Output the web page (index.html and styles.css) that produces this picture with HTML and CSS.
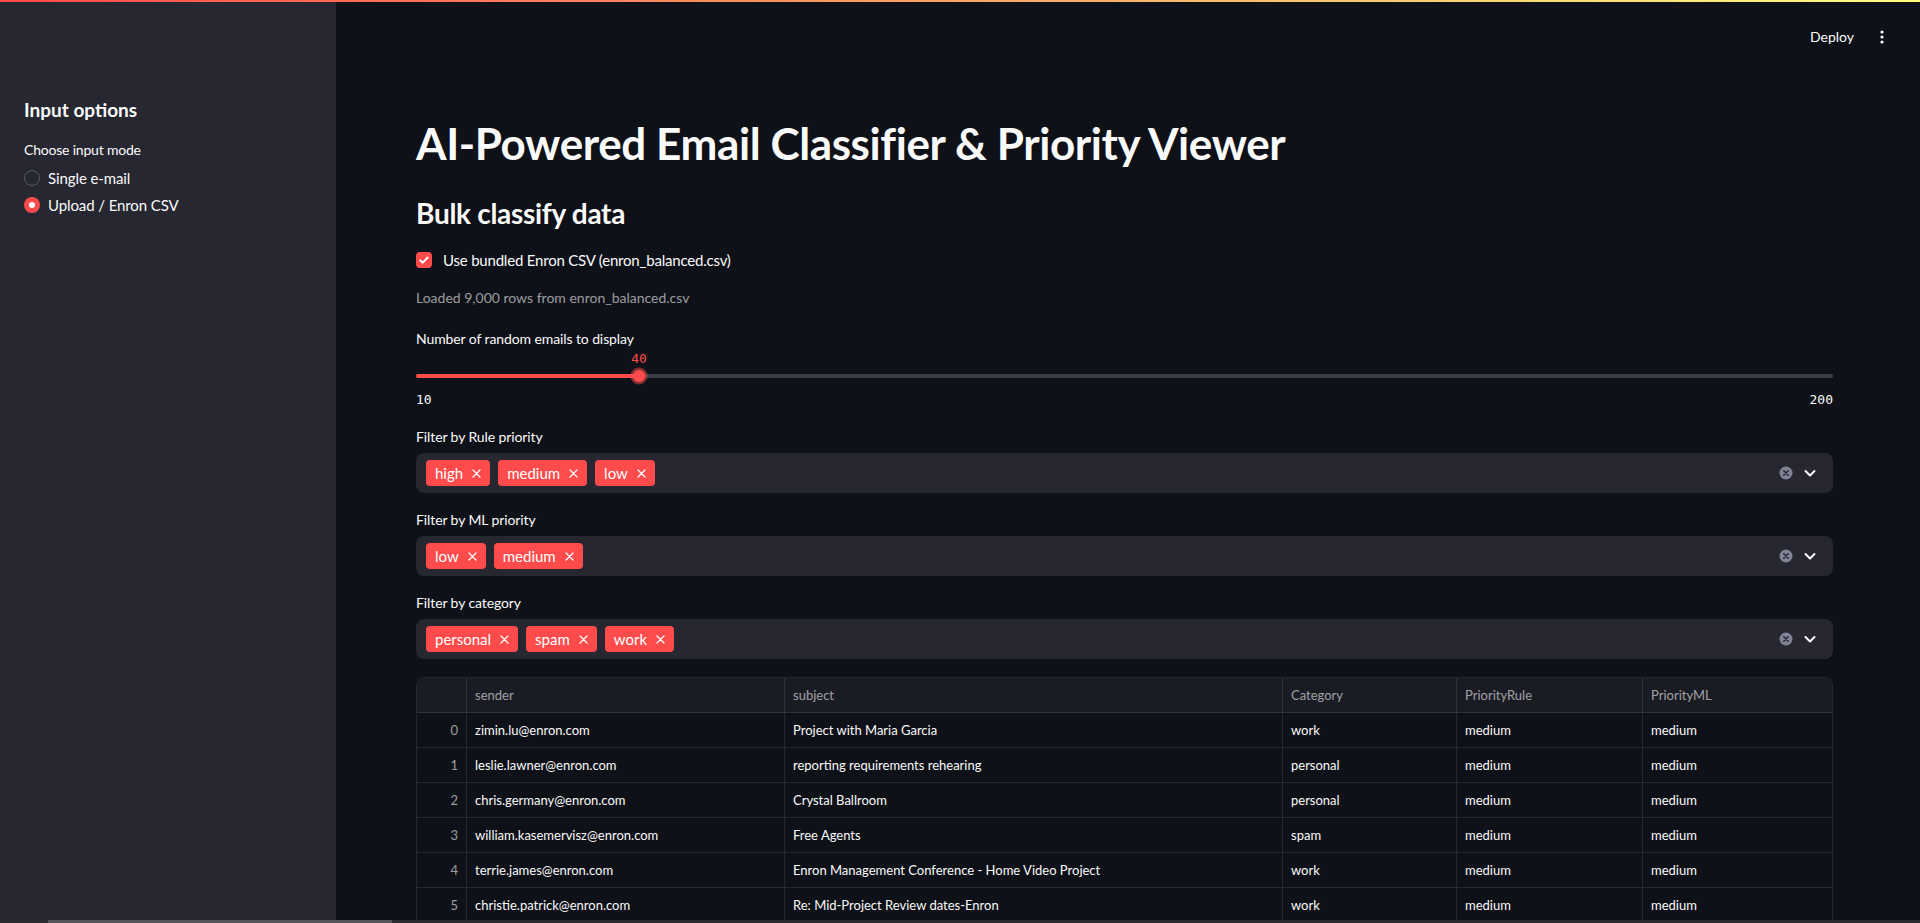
FILE: index.html
```html
<!DOCTYPE html>
<html lang="en">
<head>
<meta charset="utf-8">
<title>AI-Powered Email Classifier</title>
<link rel="stylesheet" href="styles.css">
</head>
<body>
<div class="decoration"></div>
<div class="app">
  <aside class="sidebar">
    <h2 class="side-title">Input options</h2>
    <div class="side-label">Choose input mode</div>
    <div class="radio-group">
      <div class="radio"><span class="radio-dot"></span><span>Single e-mail</span></div>
      <div class="radio checked"><span class="radio-dot"></span><span>Upload / Enron CSV</span></div>
    </div>
  </aside>
  <main class="main">
    <header class="topbar">
      <span class="deploy">Deploy</span>
      <svg class="kebab" width="16" height="16" viewBox="0 0 16 16"><circle cx="8" cy="3" r="1.6" fill="#fafafa"/><circle cx="8" cy="8" r="1.6" fill="#fafafa"/><circle cx="8" cy="13" r="1.6" fill="#fafafa"/></svg>
    </header>
    <div class="block">
      <h1 class="title">AI-Powered Email Classifier &amp; Priority Viewer</h1>
      <h3 class="subheader">Bulk classify data</h3>
      <div class="checkbox-row">
        <span class="checkbox"><svg width="12" height="12" viewBox="0 0 12 12"><path d="M2.2 6.2 L4.8 8.7 L9.8 3.4" fill="none" stroke="#fff" stroke-width="1.9" stroke-linecap="round" stroke-linejoin="round"/></svg></span>
        <span>Use bundled Enron CSV (enron_balanced.csv)</span>
      </div>
      <div class="caption">Loaded 9,000 rows from enron_balanced.csv</div>

      <div class="slider">
        <div class="label">Number of random emails to display</div>
        <div class="slider-rail">
          <div class="slider-value" style="left: 15.74%">40</div>
          <div class="track"><div class="track-fill" style="width: 15.74%"></div><div class="thumb" style="left: 15.74%"></div></div>
        </div>
        <div class="slider-ticks"><span>10</span><span>200</span></div>
      </div>

      <div class="label filter-label">Filter by Rule priority</div>
      <div class="multiselect">
        <div class="chips">
          <span class="chip">high<svg class="chip-x" width="9" height="9" viewBox="0 0 9 9"><path d="M1 1 L8 8 M8 1 L1 8" stroke="#fff" stroke-width="1.3" stroke-linecap="round"/></svg></span>
          <span class="chip">medium<svg class="chip-x" width="9" height="9" viewBox="0 0 9 9"><path d="M1 1 L8 8 M8 1 L1 8" stroke="#fff" stroke-width="1.3" stroke-linecap="round"/></svg></span>
          <span class="chip">low<svg class="chip-x" width="9" height="9" viewBox="0 0 9 9"><path d="M1 1 L8 8 M8 1 L1 8" stroke="#fff" stroke-width="1.3" stroke-linecap="round"/></svg></span>
        </div>
        <div class="ms-icons">
          <svg width="14" height="14" viewBox="0 0 14 14"><circle cx="7" cy="7" r="6.5" fill="#808495"/><path d="M4.8 4.8 L9.2 9.2 M9.2 4.8 L4.8 9.2" stroke="#262730" stroke-width="1.6" stroke-linecap="round"/></svg>
          <svg width="14" height="14" viewBox="0 0 14 14"><path d="M2.5 5 L7 9.5 L11.5 5" fill="none" stroke="#fafafa" stroke-width="2" stroke-linecap="round" stroke-linejoin="round"/></svg>
        </div>
      </div>

      <div class="label filter-label">Filter by ML priority</div>
      <div class="multiselect">
        <div class="chips">
          <span class="chip">low<svg class="chip-x" width="9" height="9" viewBox="0 0 9 9"><path d="M1 1 L8 8 M8 1 L1 8" stroke="#fff" stroke-width="1.3" stroke-linecap="round"/></svg></span>
          <span class="chip">medium<svg class="chip-x" width="9" height="9" viewBox="0 0 9 9"><path d="M1 1 L8 8 M8 1 L1 8" stroke="#fff" stroke-width="1.3" stroke-linecap="round"/></svg></span>
        </div>
        <div class="ms-icons">
          <svg width="14" height="14" viewBox="0 0 14 14"><circle cx="7" cy="7" r="6.5" fill="#808495"/><path d="M4.8 4.8 L9.2 9.2 M9.2 4.8 L4.8 9.2" stroke="#262730" stroke-width="1.6" stroke-linecap="round"/></svg>
          <svg width="14" height="14" viewBox="0 0 14 14"><path d="M2.5 5 L7 9.5 L11.5 5" fill="none" stroke="#fafafa" stroke-width="2" stroke-linecap="round" stroke-linejoin="round"/></svg>
        </div>
      </div>

      <div class="label filter-label">Filter by category</div>
      <div class="multiselect">
        <div class="chips">
          <span class="chip">personal<svg class="chip-x" width="9" height="9" viewBox="0 0 9 9"><path d="M1 1 L8 8 M8 1 L1 8" stroke="#fff" stroke-width="1.3" stroke-linecap="round"/></svg></span>
          <span class="chip">spam<svg class="chip-x" width="9" height="9" viewBox="0 0 9 9"><path d="M1 1 L8 8 M8 1 L1 8" stroke="#fff" stroke-width="1.3" stroke-linecap="round"/></svg></span>
          <span class="chip">work<svg class="chip-x" width="9" height="9" viewBox="0 0 9 9"><path d="M1 1 L8 8 M8 1 L1 8" stroke="#fff" stroke-width="1.3" stroke-linecap="round"/></svg></span>
        </div>
        <div class="ms-icons">
          <svg width="14" height="14" viewBox="0 0 14 14"><circle cx="7" cy="7" r="6.5" fill="#808495"/><path d="M4.8 4.8 L9.2 9.2 M9.2 4.8 L4.8 9.2" stroke="#262730" stroke-width="1.6" stroke-linecap="round"/></svg>
          <svg width="14" height="14" viewBox="0 0 14 14"><path d="M2.5 5 L7 9.5 L11.5 5" fill="none" stroke="#fafafa" stroke-width="2" stroke-linecap="round" stroke-linejoin="round"/></svg>
        </div>
      </div>

      <div class="table">
        <div class="row head">
          <div class="cell idx"></div><div class="cell c1">sender</div><div class="cell c2">subject</div><div class="cell c3">Category</div><div class="cell c4">PriorityRule</div><div class="cell c5">PriorityML</div>
        </div>
        <div class="row"><div class="cell idx">0</div><div class="cell c1">zimin.lu@enron.com</div><div class="cell c2">Project with Maria Garcia</div><div class="cell c3">work</div><div class="cell c4">medium</div><div class="cell c5">medium</div></div>
        <div class="row"><div class="cell idx">1</div><div class="cell c1">leslie.lawner@enron.com</div><div class="cell c2">reporting requirements rehearing</div><div class="cell c3">personal</div><div class="cell c4">medium</div><div class="cell c5">medium</div></div>
        <div class="row"><div class="cell idx">2</div><div class="cell c1">chris.germany@enron.com</div><div class="cell c2">Crystal Ballroom</div><div class="cell c3">personal</div><div class="cell c4">medium</div><div class="cell c5">medium</div></div>
        <div class="row"><div class="cell idx">3</div><div class="cell c1">william.kasemervisz@enron.com</div><div class="cell c2">Free Agents</div><div class="cell c3">spam</div><div class="cell c4">medium</div><div class="cell c5">medium</div></div>
        <div class="row"><div class="cell idx">4</div><div class="cell c1">terrie.james@enron.com</div><div class="cell c2">Enron Management Conference - Home Video Project</div><div class="cell c3">work</div><div class="cell c4">medium</div><div class="cell c5">medium</div></div>
        <div class="row"><div class="cell idx">5</div><div class="cell c1">christie.patrick@enron.com</div><div class="cell c2">Re: Mid-Project Review dates-Enron</div><div class="cell c3">work</div><div class="cell c4">medium</div><div class="cell c5">medium</div></div>
      </div>
    </div>
  </main>
</div>
<div class="hscroll"><div class="hscroll-thumb"></div></div>
</body>
</html>
```
FILE: styles.css
```css
* { box-sizing: border-box; }
html, body {
  margin: 0;
  padding: 0;
  height: 100%;
  overflow: hidden;
  background: #0e1117;
  color: #fafafa;
  font-family: "Lato", "Open Sans", sans-serif;
  font-size: 16px;
}
.decoration {
  position: fixed;
  top: 0; left: 0; right: 0;
  height: 2px;
  background: linear-gradient(90deg, #ff4b4b, #fffd80);
  z-index: 10;
}
.app {
  display: flex;
  height: 100vh;
}
.sidebar {
  width: 336px;
  flex: 0 0 336px;
  background: #262730;
  padding: 96px 24px 0 24px;
}
.side-title {
  margin: 0;
  font-size: 19px;
  font-weight: 700;
  line-height: 28px;
}
.side-label {
  margin-top: 16px;
  font-size: 14px;
  line-height: 20px;
  letter-spacing: -0.2px;
}
.radio-group {
  margin-top: 7px;
  display: flex;
  flex-direction: column;
  gap: 5px;
}
.radio {
  display: flex;
  align-items: center;
  gap: 8px;
  height: 22px;
  font-size: 15px;
  letter-spacing: -0.1px;
}
.radio-dot {
  width: 16px;
  height: 16px;
  border-radius: 50%;
  border: 1px solid #5a5c66;
  background: #262730;
  flex: 0 0 16px;
}
.radio.checked .radio-dot {
  border: 5px solid #ff4b4b;
  background: #fff;
}
.main {
  flex: 1;
  position: relative;
  padding: 116px 87px 0 80px;
  overflow: hidden;
}
.topbar {
  position: absolute;
  top: 0; left: 0; right: 0;
  height: 74px;
  display: flex;
  align-items: center;
  justify-content: flex-end;
  padding: 0 30px 0 0;
  gap: 20px;
}
.deploy {
  font-size: 14px;
  line-height: 20px;
}
.block {
  display: flex;
  flex-direction: column;
}
.title {
  margin: 0;
  font-size: 44px;
  line-height: 54px;
  font-weight: 700;
  letter-spacing: -0.4px;
}
.subheader {
  margin: 23px 0 0 0;
  font-size: 28px;
  line-height: 40px;
  font-weight: 700;
  letter-spacing: -0.3px;
}
.checkbox-row {
  margin-top: 15px;
  display: flex;
  align-items: center;
  gap: 11px;
  height: 24px;
  font-size: 15px;
  letter-spacing: -0.2px;
}
.checkbox {
  width: 16px;
  height: 16px;
  border-radius: 4px;
  background: #ff4b4b;
  display: flex;
  align-items: center;
  justify-content: center;
}
.caption {
  margin-top: 16px;
  font-size: 14px;
  line-height: 20px;
  color: rgba(250, 250, 250, 0.6);
}
.label {
  font-size: 14px;
  line-height: 20px;
  letter-spacing: -0.1px;
}
.slider { margin-top: 21px; }
.slider-rail {
  position: relative;
  height: 40px;
}
.slider-value {
  position: absolute;
  top: 2px;
  transform: translateX(-50%);
  font-family: "DejaVu Sans Mono", "Liberation Mono", monospace;
  font-size: 13px;
  line-height: 16px;
  color: #ff4b4b;
}
.track {
  position: absolute;
  left: 0; right: 0;
  top: 25px;
  height: 4px;
  border-radius: 2px;
  background: #3b3d45;
}
.track-fill {
  height: 4px;
  border-radius: 2px;
  background: #ff4b4b;
}
.thumb {
  position: absolute;
  top: -4px;
  width: 12px;
  height: 12px;
  margin-left: -6px;
  border-radius: 50%;
  background: #ff4b4b;
  box-shadow: 0 0 0 2.5px rgba(255, 75, 75, 0.5);
}
.slider-ticks {
  margin-top: 1px;
  display: flex;
  justify-content: space-between;
  font-family: "DejaVu Sans Mono", "Liberation Mono", monospace;
  font-size: 13px;
  line-height: 20px;
}
.filter-label { margin-top: 17px; }
.multiselect {
  margin-top: 6px;
  height: 40px;
  border-radius: 8px;
  background: #262730;
  display: flex;
  align-items: center;
  justify-content: space-between;
  padding: 0 16px 0 10px;
}
.chips {
  display: flex;
  gap: 8px;
}
.chip {
  display: flex;
  align-items: center;
  height: 26px;
  padding: 0 9px 0 9px;
  border-radius: 4px;
  background: #ff4b4b;
  color: #fff;
  font-size: 15px;
}
.chip-x {
  margin-left: 9px;
}
.ms-icons {
  display: flex;
  align-items: center;
  gap: 10px;
}
.table {
  margin-top: 18px;
  border: 1px solid rgba(250, 250, 250, 0.1);
  border-radius: 8px 8px 0 0;
  overflow: hidden;
}
.row {
  display: flex;
  height: 35px;
  border-bottom: 1px solid rgba(250, 250, 250, 0.1);
}
.row.head {
  background: #1a1c24;
  color: rgba(250, 250, 250, 0.6);
}
.cell {
  font-size: 13px;
  line-height: 34px;
  padding: 0 8px;
  white-space: nowrap;
  overflow: hidden;
  border-right: 1px solid rgba(250, 250, 250, 0.1);
}
.cell:last-child { border-right: none; }
.idx {
  width: 50px;
  flex: 0 0 50px;
  text-align: right;
  color: rgba(250, 250, 250, 0.6);
}
.c1 { width: 318px; flex: 0 0 318px; }
.c2 { width: 498px; flex: 0 0 498px; }
.c3 { width: 174px; flex: 0 0 174px; }
.c4 { width: 186px; flex: 0 0 186px; }
.c5 { flex: 1; }
.hscroll {
  position: fixed;
  left: 0; right: 0; bottom: 0;
  height: 3px;
  background: #2b2c31;
}
.hscroll-thumb {
  position: absolute;
  left: 48px;
  width: 344px;
  top: 0; bottom: 0;
  background: #55565b;
}
```
